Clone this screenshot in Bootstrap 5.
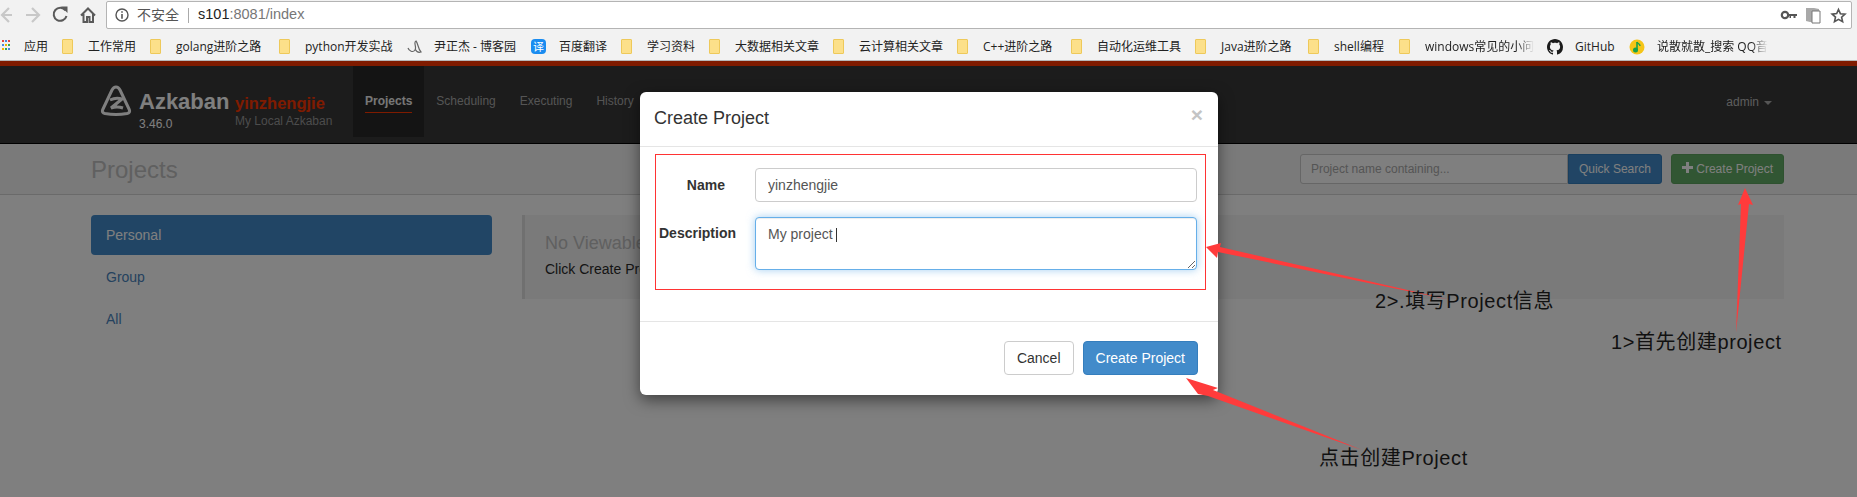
<!doctype html>
<html lang="zh-CN">
  <head>
    <meta charset="UTF-8" />
    <title>Azkaban - Create Project</title>
    <link href="https://cdn.jsdelivr.net/npm/bootstrap@5.3.0/dist/css/bootstrap.min.css" rel="stylesheet" />
    <style>
      html, body { height: 497px; overflow: hidden; }
      body { font-family: "Liberation Sans", "Noto Sans CJK SC", sans-serif; font-size: 14px; background: #fff; }

      /* browser chrome */
      .tool-row { height: 33px; background: #f2f2f2; }
      .tool-icons { width: 106px; }
      .addr-box { width: 1746px; height: 28px; margin-top: 1px; background: #fff; border: 1px solid #b4b4b4; border-radius: 2px; }
      .addr-warn { color: #555; font-size: 14px; line-height: 1; }
      .addr-sep { width: 1px; height: 15px; background: #aaa; margin: 0 9px; }
      .addr-host { color: #222; font-size: 14.500px; }
      .addr-rest { color: #777; font-size: 14.500px; }
      .mark-row { height: 28px; background: #f2f2f2; border-bottom: 1px solid #b8b8b8; font-family: "Open Sans", "Noto Sans CJK SC", sans-serif; font-size: 12px; color: #222; white-space: nowrap; }
      .mark-item { flex: none; display: flex; align-items: center; }
      .mark-fold { width: 11px; height: 15px; background: #fce08a; border: 1px solid #eec95a; border-radius: 1px; margin-right: 15px; flex: none; }
      .mark-fade { -webkit-mask-image: linear-gradient(90deg, #000 85%, transparent); mask-image: linear-gradient(90deg, #000 85%, transparent); }
      .mark-apps { margin-left: 2px; width: 60px; }
      .mark-apps svg { margin-right: 14px; }
      .mark-fav { margin-right: 12px; flex: none; }
      .mark-yi { width: 15px; height: 15px; margin-right: 13px; background: #1a8cf0; font-size: 11px; line-height: 15px; }
      .w-88 { width: 88px; } .w-129 { width: 129px; } .w-127 { width: 127px; } .w-125 { width: 125px; }
      .w-90 { width: 90px; } .w-124 { width: 124px; } .w-114 { width: 114px; } .w-113 { width: 113px; }
      .w-91 { width: 91px; } .w-148 { width: 148px; } .w-82 { width: 82px; }

      /* azkaban page */
      .app-view { position: relative; height: 436px; overflow: hidden; background: #fff; }
      .top-bar { height: 83px; background: #383838; border-top: 5px solid #ff3601; border-bottom: 1px solid #000; padding-left: 100px; }
      .brand-box { width: 253px; flex: none; }
      .brand-logo { margin: 19px 7px 0 0; flex: none; }
      .brand-text { margin-top: 24px; }
      .brand-main { width: 96px; }
      .brand-name { color: #fff; font-size: 22px; font-weight: 700; line-height: 24px; }
      .brand-ver { color: #fff; font-size: 12px; line-height: 14px; margin-top: 3px; }
      .brand-sub { color: #ff3601; font-size: 16.500px; font-weight: 700; line-height: 20px; margin-top: 3px; }
      .brand-note { color: #999; font-size: 12px; line-height: 14px; margin-top: 1px; }
      .top-link { color: #aaa; font-size: 12px; line-height: 16px; padding: 27px 12px 0; height: 71px; text-decoration: none; }
      .top-link.on { color: #eee; font-weight: 700; background: #282828; }
      .top-link.on span { display: block; padding-bottom: 3px; border-bottom: 1px solid #ff3601; }
      .top-user { color: #bbb; font-size: 12px; margin-right: 85px; margin-top: 27px; }
      .top-caret { display: inline-block; border: 4px solid transparent; border-top-color: #aaa; border-bottom: 0; margin-left: 5px; vertical-align: middle; }
      .head-bar { height: 51px; background: #f5f5f5; border-bottom: 1px solid #d5d5d5; padding: 0 73px 0 91px; }
      .head-title { font-size: 24px; color: #c0c0c0; font-weight: 400; margin: 2px 0 0; }
      .find-input { width: 268px; height: 30px; font-size: 12px; border-radius: 3px 0 0 3px; padding: 5px 10px; border-color: #ccc; }
      .find-input::placeholder { color: #aaa; }
      .find-btn, .add-btn { height: 30px; font-size: 12px; line-height: 18px; padding: 5px 10px; color: #fff; white-space: nowrap; }
      .find-btn { background: #428bca; border: 1px solid #357ebd; border-radius: 0 3px 3px 0; }
      .add-btn { background: #63ad66; border: 1px solid #5ca35f; border-radius: 3px; margin-left: 9px; }
      .main-wrap { padding: 20px 73px 0 91px; gap: 30px; }
      .side-list { width: 401px; flex: none; }
      .side-item { display: block; height: 40px; line-height: 40px; padding-left: 15px; color: #4a84bd; text-decoration: none; border-radius: 4px; margin-bottom: 2px; }
      .side-item.on { background: #428bca; color: #fff; }
      .empty-box { height: 84px; flex: 1; background: #f5f5f5; border-left: 3px solid #e0e0e0; padding: 18px 20px; }
      .empty-title { font-size: 18px; line-height: 20px; color: #c0c0c0; font-weight: 400; margin: 0 0 6px; }
      .empty-text { color: #2a2a2a; line-height: 20px; margin: 0; }
      .app-shade { position: absolute; inset: 0; background: #000; opacity: .5; }

      /* dialog */
      .create-dlg { position: absolute; left: 640px; top: 31px; width: 578px; height: 303px; background: #fff; border: 0; border-radius: 6px; box-shadow: 0 5px 15px rgba(0,0,0,.5); }
      .create-dlg .modal-header { height: 55px; padding: 0 15px 0 14px; border-bottom: 1px solid #e5e5e5; }
      .dlg-title { font-size: 18px; color: #333; font-weight: 400; margin: 0; }
      .dlg-close { background: none; border: 0; padding: 0; font-size: 21px; font-weight: 700; line-height: 1; color: #c4c4c4; margin-top: -9px; }
      .dlg-body { height: 175px; padding: 7px 15px; border-bottom: 1px solid #e5e5e5; }
      .red-box { height: 136px; width: 551px; border: 1px solid #ff3333; padding: 13px 8px 0 0; }
      .field-row { margin-bottom: 15px; }
      .field-label { width: 99px; flex: none; font-weight: 700; color: #333; text-align: right; margin: 0; white-space: nowrap; }
      .label-name { padding-right: 30px; }
      .label-desc { padding: 6px 19px 0 0; }
      .field-name { height: 34px; width: 442px; flex: none; color: #555; border-color: #ccc; border-radius: 4px; padding: 6px 12px; font-size: 14px; }
      .field-wrap { position: relative; width: 442px; flex: none; }
      .field-desc { height: 53px; color: #555; border-radius: 4px; padding: 6px 12px; font-size: 14px; border-color: #66afe9; box-shadow: inset 0 1px 1px rgba(0,0,0,.075), 0 0 8px rgba(102,175,233,.6); }
      .text-caret { position: absolute; left: 81px; top: 11px; width: 1px; height: 14px; background: #333; }
      .dlg-foot { height: 73px; padding: 19px 20px 0 0; gap: 9px; }
      .btn-plain { height: 34px; padding: 6px 12px; font-size: 14px; color: #333; background: #fff; border: 1px solid #ccc; border-radius: 4px; }
      .btn-main { height: 34px; padding: 6px 12px; font-size: 14px; color: #fff; background: #428bca; border: 1px solid #357ebd; border-radius: 4px; }

      /* red arrows and notes drawn on top of the screenshot */
      .note-layer { position: absolute; left: 0; top: 0; pointer-events: none; }
      .note-text { position: absolute; font-size: 20px; line-height: 24px; letter-spacing: .6px; color: #111; white-space: nowrap; }
      .note-one { left: 1611px; top: 269px; }
      .note-two { left: 1375px; top: 228px; }
      .note-three { left: 1319px; top: 385px; }
    </style>
  </head>
  <body>
    <div class="tool-row d-flex">
      <div class="tool-icons">
        <svg width="106" height="33" viewBox="0 0 106 33">
          <path d="M9 8 2 15l7 7M2 15h10" fill="none" stroke="#c8c8c8" stroke-width="2.2" />
          <path d="M32 8l7 7-7 7M39 15H26" fill="none" stroke="#c8c8c8" stroke-width="2.2" />
          <path d="M65.500 10.500A6.500 6.500 0 1 0 66.500 16" fill="none" stroke="#5a5a5a" stroke-width="2" />
          <path d="M61 6.500h6.500v6.500z" fill="#5a5a5a" />
          <path d="M81 15.500 88 8.500l7 7M83.500 14v8h3.500v-5h2.500v5h3.500v-8" fill="none" stroke="#5a5a5a" stroke-width="2" />
        </svg>
      </div>
      <div class="addr-box d-flex align-items-center">
        <svg class="ms-2" width="14" height="14" viewBox="0 0 14 14">
          <circle cx="7" cy="7" r="6" fill="none" stroke="#555" stroke-width="1.400" />
          <path d="M6.200 3.200h1.600v1.500H6.200zM6.200 6h1.600v4.800H6.200z" fill="#555" />
        </svg>
        <span class="addr-warn ms-2">不安全</span>
        <span class="addr-sep"></span>
        <span><span class="addr-host">s101</span><span class="addr-rest">:8081/index</span></span>
        <svg class="ms-auto me-1" width="68" height="18" viewBox="-2 0 68 18">
          <circle cx="4" cy="9" r="3.200" fill="none" stroke="#555" stroke-width="2.200" />
          <path d="M7 8h9v2h-1.500v2h-2v-2H10v2H8.500v-2H7z" fill="#555" />
          <path d="M25 2h8l5 1v13h-9l-4-1z" fill="#a9a9a9" />
          <path d="M31 5h8v12h-8z" fill="#fff" stroke="#777" />
          <path d="M49.500 3.500l1.900 4.200 4.600.5-3.400 3 1 4.500-4.100-2.400-4 2.300 1-4.500-3.400-3 4.600-.5z" transform="translate(8 0)" fill="none" stroke="#555" stroke-width="1.600" />
        </svg>
      </div>
    </div>
    <div class="mark-row d-flex align-items-center">
      <div class="mark-item mark-apps">
        <svg width="8" height="14" viewBox="0 0 8 14" class="flex-shrink-0">
          <path d="M0 0h2v2H0z" fill="#e8453c" /><path d="M3 0h2v2H3z" fill="#4a89dc" /><path d="M6 0h2v2H6z" fill="#e8453c" />
          <path d="M0 4h2v2H0z" fill="#4a89dc" /><path d="M3 4h2v2H3z" fill="#f4b400" /><path d="M6 4h2v2H6z" fill="#34a853" />
          <path d="M0 8h2v2H0z" fill="#f4b400" /><path d="M3 8h2v2H3z" fill="#34a853" /><path d="M6 8h2v2H6z" fill="#4a89dc" />
        </svg>应用
      </div>
      <div class="mark-item w-88"><i class="mark-fold"></i>工作常用</div>
      <div class="mark-item w-129"><i class="mark-fold"></i>golang进阶之路</div>
      <div class="mark-item w-127"><i class="mark-fold"></i>python开发实战</div>
      <div class="mark-item w-125">
        <svg width="16" height="16" viewBox="0 0 16 16" class="mark-fav">
          <path d="M2 9c1 3 5 5 7 2 2-3-2-8 1-9 2 2 2 8 5 11-3 1-5-1-6-3" fill="none" stroke="#666" stroke-width="1.200" />
        </svg>尹正杰 - 博客园
      </div>
      <div class="mark-item w-90">
        <span class="mark-yi d-inline-block text-white text-center rounded-1">译</span>百度翻译
      </div>
      <div class="mark-item w-88"><i class="mark-fold"></i>学习资料</div>
      <div class="mark-item w-124"><i class="mark-fold"></i>大数据相关文章</div>
      <div class="mark-item w-124"><i class="mark-fold"></i>云计算相关文章</div>
      <div class="mark-item w-114"><i class="mark-fold"></i>C++进阶之路</div>
      <div class="mark-item w-124"><i class="mark-fold"></i>自动化运维工具</div>
      <div class="mark-item w-113"><i class="mark-fold"></i>Java进阶之路</div>
      <div class="mark-item w-91"><i class="mark-fold"></i>shell编程</div>
      <div class="mark-item w-148"><i class="mark-fold"></i><span class="mark-fade">windows常见的小问</span></div>
      <div class="mark-item w-82">
        <svg width="16" height="16" viewBox="0 0 16 16" class="mark-fav">
          <path fill="#1b1b1b" d="M8 0C3.580 0 0 3.580 0 8c0 3.540 2.290 6.530 5.470 7.590.4.070.55-.17.55-.38 0-.19-.01-.82-.01-1.490-2.010.370-2.530-.490-2.690-.940-.09-.230-.480-.940-.820-1.130-.280-.150-.680-.520-.010-.530.630-.010 1.080.580 1.230.820.720 1.210 1.870.870 2.330.660.070-.520.280-.870.510-1.070-1.780-.200-3.640-.890-3.640-3.950 0-.870.310-1.590.820-2.150-.080-.200-.360-1.020.080-2.120 0 0 .670-.210 2.200.820.640-.180 1.320-.270 2-.270s1.360.090 2 .270c1.530-1.040 2.200-.820 2.200-.820.440 1.100.160 1.920.080 2.120.510.560.820 1.270.820 2.150 0 3.070-1.870 3.750-3.650 3.950.290.250.540.730.540 1.480 0 1.070-.010 1.930-.010 2.200 0 .210.150.460.550.380A8.010 8.010 0 0 0 16 8c0-4.420-3.580-8-8-8z" />
        </svg>GitHub
      </div>
      <div class="mark-item">
        <svg width="16" height="16" viewBox="0 0 16 16" class="mark-fav">
          <circle cx="8" cy="8" r="7.500" fill="#f5c518" />
          <path d="M8 3v8" stroke="#15a04a" stroke-width="1.600" /><circle cx="6.500" cy="11" r="2.500" fill="#15a04a" /><path d="M8 3c1 2 3 2 3 4" fill="none" stroke="#15a04a" stroke-width="1.400" />
        </svg><span class="mark-fade">说散就散_搜索 QQ音</span>
      </div>
    </div>

    <div class="app-view">
      <div class="top-bar d-flex">
        <div class="brand-box d-flex">
          <svg width="32" height="32" viewBox="0 0 32 32" class="brand-logo">
            <path d="M16 2c-2 0-3 1-4 3L3 24c-1.500 3 0 4 2 4.500q11 2 22 0c2-.5 3.500-1.500 2-4.500L20 5c-1-2-2-3-4-3z" fill="none" stroke="#fff" stroke-width="3" />
            <path d="M10 15q6-3 12-1L11 23q6-2 12 0" fill="none" stroke="#fff" stroke-width="3" />
          </svg>
          <div class="brand-text d-flex">
            <div class="brand-main">
              <div class="brand-name">Azkaban</div>
              <div class="brand-ver">3.46.0</div>
            </div>
            <div>
              <div class="brand-sub">yinzhengjie</div>
              <div class="brand-note">My Local Azkaban</div>
            </div>
          </div>
        </div>
        <a class="top-link on" href="#"><span>Projects</span></a>
        <a class="top-link" href="#">Scheduling</a>
        <a class="top-link" href="#">Executing</a>
        <a class="top-link" href="#">History</a>
        <div class="top-user ms-auto">admin<i class="top-caret"></i></div>
      </div>
      <div class="head-bar d-flex align-items-center justify-content-between">
        <h1 class="head-title">Projects</h1>
        <div class="d-flex">
          <input class="form-control find-input" type="text" placeholder="Project name containing..." />
          <button class="btn find-btn" type="button">Quick Search</button>
          <button class="btn add-btn" type="button">
            <svg width="11" height="11" viewBox="0 0 11 11" class="align-baseline"><path d="M4 0h3v4h4v3H7v4H4V7H0V4h4z" fill="#fff" /></svg>
            Create Project
          </button>
        </div>
      </div>
      <div class="main-wrap d-flex">
        <div class="side-list">
          <a class="side-item on" href="#">Personal</a>
          <a class="side-item" href="#">Group</a>
          <a class="side-item" href="#">All</a>
        </div>
        <div class="empty-box">
          <h4 class="empty-title">No Viewable Projects</h4>
          <p class="empty-text">Click Create Project to create a new project.</p>
        </div>
      </div>
      <div class="app-shade"></div>

      <div class="modal-content create-dlg">
        <div class="modal-header">
          <h4 class="dlg-title">Create Project</h4>
          <button class="dlg-close" type="button">×</button>
        </div>
        <div class="dlg-body">
          <form class="red-box">
            <div class="field-row d-flex align-items-center">
              <label class="field-label label-name">Name</label>
              <input class="form-control field-name" type="text" value="yinzhengjie" />
            </div>
            <div class="d-flex">
              <label class="field-label label-desc">Description</label>
              <div class="field-wrap">
                <textarea class="form-control field-desc">My project </textarea>
                <span class="text-caret"></span>
              </div>
            </div>
          </form>
        </div>
        <div class="dlg-foot d-flex justify-content-end">
          <button class="btn btn-plain" type="button">Cancel</button>
          <button class="btn btn-main" type="button">Create Project</button>
        </div>
      </div>

      <svg class="note-layer" width="1857" height="436" viewBox="0 61 1857 436">
        <polygon points="1745,188 1753,205 1749,204 1736,333 1741,204 1738,205" fill="#ff3b3b" />
        <polygon points="1206,247 1221,243 1220,247 1451,300 1218,252 1217,258" fill="#ff3b3b" />
        <polygon points="1186,378 1218,388 1213,390 1362,450 1208,396 1198,394" fill="#ff3b3b" />
      </svg>
      <span class="note-text note-one">1&gt;首先创建project</span>
      <span class="note-text note-two">2&gt;.填写Project信息</span>
      <span class="note-text note-three">点击创建Project</span>
    </div>
  </body>
</html>
